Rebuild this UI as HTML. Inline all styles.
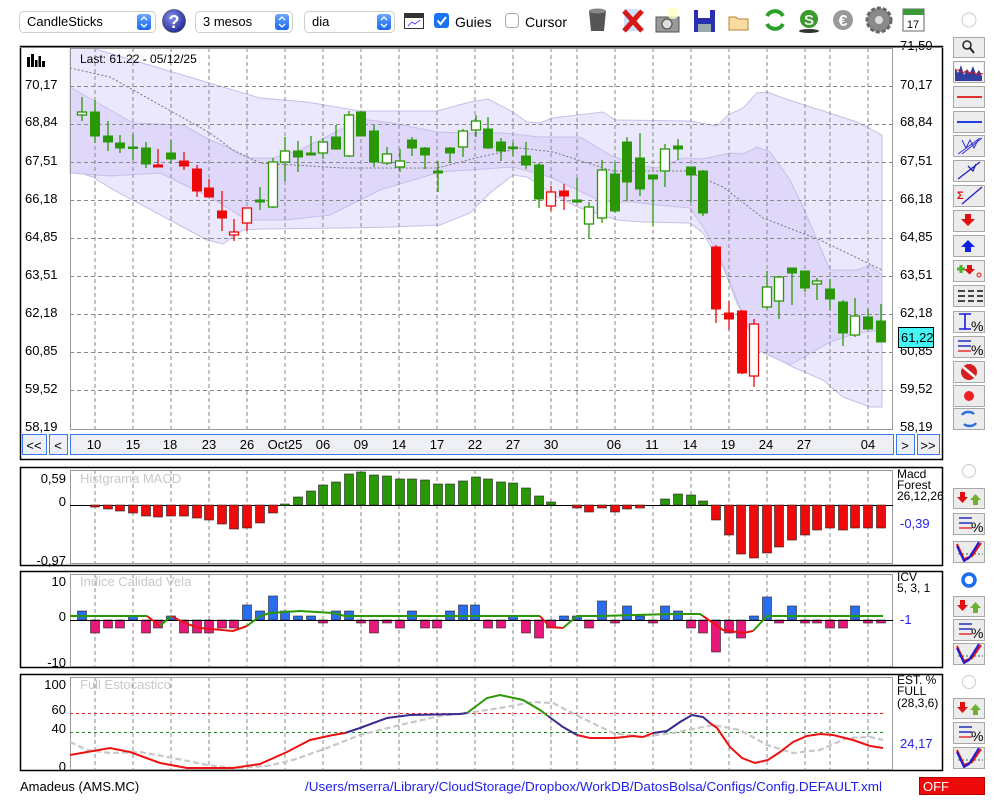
<!DOCTYPE html>
<html><head><meta charset="utf-8">
<style>
html,body{margin:0;padding:0;background:#fff;width:1000px;height:800px;overflow:hidden;font-family:"Liberation Sans",sans-serif;}
svg{position:absolute;left:0;top:0}
text{font-family:"Liberation Sans",sans-serif}
</style></head><body>
<svg width="1000" height="800" viewBox="0 0 1000 800" xmlns="http://www.w3.org/2000/svg">
<defs>
<linearGradient id="bl" x1="0" y1="0" x2="0" y2="1"><stop offset="0" stop-color="#6aa8ff"/><stop offset="1" stop-color="#1a66f0"/></linearGradient>
<radialGradient id="q" cx="0.4" cy="0.35" r="0.7"><stop offset="0" stop-color="#8a90f0"/><stop offset="1" stop-color="#1a2590"/></radialGradient>
</defs>
<!-- top toolbar -->
<g font-size="13" fill="#000">
<rect x="19.5" y="11.5" width="136" height="21" rx="4" fill="#fff" stroke="#cfcfcf"/>
<text x="27" y="26">CandleSticks</text>
<rect x="137" y="14" width="14" height="16" rx="3" fill="url(#bl)"/>
<path d="M141 20l3-3 3 3M141 24l3 3 3-3" stroke="#fff" fill="none" stroke-width="1.3"/>
<circle cx="174" cy="21" r="11.5" fill="url(#q)" stroke="#556" stroke-width="0.8"/>
<text x="174" y="28" font-size="18" font-weight="bold" fill="#fff" text-anchor="middle">?</text>
<rect x="195.5" y="11.5" width="97" height="21" rx="4" fill="#fff" stroke="#cfcfcf"/>
<text x="203" y="26">3 mesos</text>
<rect x="275" y="14" width="14" height="16" rx="3" fill="url(#bl)"/>
<path d="M279 20l3-3 3 3M279 24l3 3 3-3" stroke="#fff" fill="none" stroke-width="1.3"/>
<rect x="304.5" y="11.5" width="90" height="21" rx="4" fill="#fff" stroke="#cfcfcf"/>
<text x="312" y="26">dia</text>
<rect x="377" y="14" width="14" height="16" rx="3" fill="url(#bl)"/>
<path d="M381 20l3-3 3 3M381 24l3 3 3-3" stroke="#fff" fill="none" stroke-width="1.3"/>
<rect x="404.5" y="13.5" width="19" height="15" fill="#fff" stroke="#333"/>
<rect x="405" y="14" width="18" height="4" fill="#333"/>
<path d="M408 26l4-4 3 2 5-4" stroke="#22f" fill="none" stroke-width="0.8"/>
<rect x="434" y="13" width="15" height="15" rx="3" fill="#1a73f0"/>
<path d="M437.5 20.5l3 3.5 5.5-7" stroke="#fff" fill="none" stroke-width="2"/>
<text x="455" y="27" font-size="14">Guies</text>
<rect x="505.5" y="13.5" width="13" height="14" rx="3" fill="#fff" stroke="#aaa"/>
<text x="525" y="27" font-size="14">Cursor</text>
</g>
<!-- icons top -->
<path d="M589 11h17l-2 20h-13z" fill="#555"/><ellipse cx="597.5" cy="11" rx="8.5" ry="2.5" fill="#888"/>
<rect x="624" y="9" width="14" height="22" fill="#cfe0ff"/>
<path d="M624 11l18 20M642 11l-18 20" stroke="#d81818" stroke-width="5"/>
<rect x="656" y="17" width="23" height="15" fill="#999" stroke="#555"/><circle cx="667" cy="24" r="5" fill="#ddd" stroke="#444"/><circle cx="673" cy="13" r="6" fill="#ffffc8" opacity="0.8"/>
<rect x="694" y="10" width="21" height="22" fill="#2830b0"/><rect x="698" y="10" width="12" height="8" fill="#fff"/><rect x="698" y="24" width="13" height="8" fill="#9aa"/>
<path d="M729 17h7l2 2h10v11h-19z" fill="#f8dca0" stroke="#b88040"/>
<path d="M767 16a9 9 0 0 1 16 0" stroke="#2aa02a" stroke-width="4" fill="none"/><path d="M783 24a9 9 0 0 1-16 0" stroke="#2aa02a" stroke-width="4" fill="none"/>
<ellipse cx="809" cy="31" rx="10" ry="2" fill="#333"/><circle cx="809" cy="19" r="9" fill="#3a9a2a"/><text x="809" y="25" font-size="15" font-weight="bold" fill="#eee" text-anchor="middle">S</text>
<circle cx="843" cy="20" r="10" fill="#999"/><text x="843" y="26" font-size="16" font-weight="bold" fill="#fff" text-anchor="middle">€</text>
<circle cx="879" cy="20" r="12" fill="#8a8a8a" stroke="#666" stroke-dasharray="4 2" stroke-width="3"/><circle cx="879" cy="20" r="4" fill="#ddd"/>
<rect x="903" y="9" width="21" height="22" fill="#fff" stroke="#666"/><rect x="903" y="9" width="21" height="6" fill="#3a9a3a"/><text x="913" y="28" font-size="11" text-anchor="middle">17</text>
<circle cx="969" cy="20" r="7" fill="#fff" stroke="#ccc"/>

<!-- MAIN PANEL -->
<rect x="20.5" y="46.5" width="922" height="413" fill="#fff" stroke="#000" stroke-width="1.5"/>
<polygon points="70,48 92,48 260,98 307,102 360,111 437,111 470,102 488,99 513,112 527,122 540,123 552,118 603,112 615,120 690,121 717,126 728,115 743,108 757,93 767,92 783,98 820,110 857,122 882,135 882,407 870,407 843,397 823,380 793,367 760,350 737,303 723,267 703,233 690,223 643,222 617,220 580,208 557,197 527,177 513,175 490,193 470,213 440,225 393,227 343,228 260,229 243,230 223,244 207,240 110,188 93,177 70,170" fill="#ebe7fd" stroke="#c6bfe8"/>
<polygon points="70,87 133,123 183,125 210,140 227,147 247,158 273,158 300,150 330,135 360,119 393,123 437,132 470,133 503,133 540,137 580,137 610,155 637,165 657,168 683,158 703,159 730,153 743,154 757,147 770,152 790,180 803,207 830,270 857,270 870,265 882,275 882,330 857,333 830,342 790,365 757,350 720,257 703,227 690,208 657,205 633,202 603,202 550,177 513,167 470,170 440,172 380,190 330,215 287,220 247,220 210,197 160,173 110,176 70,173" fill="#dfd8fa" stroke="#c6bfe8"/>
<polyline points="70,68 110,77 160,105 210,133 233,150 260,163 343,168 437,168 480,157 520,148 553,152 613,171 687,171 723,187 763,218 820,240 882,270" fill="none" stroke="#777" stroke-dasharray="2 2"/>
<g stroke="#888" stroke-dasharray="4 3" stroke-width="1">
<path d="M70 86.5H893M70 124.5H893M70 162.5H893M70 200.5H893M70 238.5H893M70 276.5H893M70 314.5H893M70 352.5H893M70 390.5H893"/>
<path d="M95 48V430M133 48V430M171 48V430M209 48V430M247 48V430M285 48V430M323 48V430M361 48V430M399 48V430M437 48V430M475 48V430M513 48V430M551 48V430M577 48V430M615 48V430M653 48V430M691 48V430M729 48V430M767 48V430M805 48V430M830 48V430M868 48V430"/>
<path d="M95 470V564M133 470V564M171 470V564M209 470V564M247 470V564M285 470V564M323 470V564M361 470V564M399 470V564M437 470V564M475 470V564M513 470V564M551 470V564M577 470V564M615 470V564M653 470V564M691 470V564M729 470V564M767 470V564M805 470V564M830 470V564M868 470V564"/>
<path d="M95 574V666M133 574V666M171 574V666M209 574V666M247 574V666M285 574V666M323 574V666M361 574V666M399 574V666M437 574V666M475 574V666M513 574V666M551 574V666M577 574V666M615 574V666M653 574V666M691 574V666M729 574V666M767 574V666M805 574V666M830 574V666M868 574V666"/>
<path d="M95 677V769M133 677V769M171 677V769M209 677V769M247 677V769M285 677V769M323 677V769M361 677V769M399 677V769M437 677V769M475 677V769M513 677V769M551 677V769M577 677V769M615 677V769M653 677V769M691 677V769M729 677V769M767 677V769M805 677V769M830 677V769M868 677V769"/>
</g>
<rect x="70.5" y="48.5" width="822" height="381" fill="none" stroke="#999"/>
<!-- wicks -->
<path stroke="#2a9806" stroke-width="1.3" fill="none" d="M82 97V121M95 100V143M108 121V151M120 135V153M133 134V160M146 142V168M171 140V164M260 187V210M273 158V208M285 137V181M298 141V172M311 136V155M323 138V159M336 125V150M349 111V157M361 111V136M374 125V167M387 147V165M400 149V172M412 137V156M425 147V169M438 161V192M450 147V163M463 129V157M476 115V137M488 117V149M501 138V161M513 142V156M526 142V169M539 163V208M577 178V203M589 202V239M602 160V223M615 162V213M627 137V201M640 133V196M653 175V226M665 144V187M678 139V160M691 167V202M703 170V216M767 271V309M779 277V319M792 268V305M805 271V292M817 278V300M830 279V310M843 300V346M855 298V337M868 309V329M881 304V342"/>
<path stroke="#ee0a0a" stroke-width="1.3" fill="none" d="M158 149V167M184 152V170M197 165V197M209 179V197M222 191V231M234 219V241M247 208V231M551 186V211M564 184V210M716 245V323M729 301V330M742 310V374M754 319V387"/>
<g fill="#2a9806" stroke="#2a9806">
<rect x="90.5" y="112" width="9" height="24"/><rect x="103.5" y="136" width="9" height="6"/><rect x="115.5" y="143" width="9" height="5"/><rect x="128.5" y="147" width="9" height="1.5"/><rect x="141.5" y="148" width="9" height="16"/><rect x="166.5" y="153" width="9" height="6"/><rect x="255.5" y="200" width="9" height="2"/><rect x="293.5" y="151" width="9" height="6"/><rect x="306.5" y="153" width="9" height="2"/><rect x="331.5" y="137" width="9" height="12"/><rect x="356.5" y="112" width="9" height="24"/><rect x="369.5" y="131" width="9" height="31"/><rect x="407.5" y="140" width="9" height="8"/><rect x="420.5" y="148" width="9" height="7"/><rect x="433.5" y="171" width="9" height="2"/><rect x="445.5" y="148" width="9" height="5"/><rect x="483.5" y="129" width="9" height="19"/><rect x="496.5" y="142" width="9" height="9"/><rect x="508.5" y="147" width="9" height="1.5"/><rect x="521.5" y="156" width="9" height="9"/><rect x="534.5" y="165" width="9" height="34"/><rect x="572.5" y="200" width="9" height="2"/><rect x="610.5" y="174" width="9" height="37"/><rect x="622.5" y="142" width="9" height="40"/><rect x="635.5" y="158" width="9" height="31"/><rect x="648.5" y="175" width="9" height="4"/><rect x="673.5" y="146" width="9" height="3"/><rect x="686.5" y="167" width="9" height="8"/><rect x="698.5" y="171" width="9" height="42"/><rect x="787.5" y="268" width="9" height="5"/><rect x="800.5" y="271" width="9" height="17"/><rect x="825.5" y="289" width="9" height="10"/><rect x="838.5" y="302" width="9" height="31"/><rect x="863.5" y="317" width="9" height="12"/><rect x="876.5" y="321" width="9" height="21"/>
</g>
<g fill="#fff" stroke="#2a9806" stroke-width="1.3">
<rect x="77.5" y="112" width="9" height="3"/><rect x="268.5" y="162" width="9" height="45"/><rect x="280.5" y="151" width="9" height="11"/><rect x="318.5" y="142" width="9" height="11"/><rect x="344.5" y="115" width="9" height="41"/><rect x="382.5" y="154" width="9" height="9"/><rect x="395.5" y="161" width="9" height="6"/><rect x="458.5" y="131" width="9" height="16"/><rect x="471.5" y="121" width="9" height="9"/><rect x="584.5" y="207" width="9" height="17"/><rect x="597.5" y="170" width="9" height="48"/><rect x="660.5" y="149" width="9" height="22"/><rect x="762.5" y="287" width="9" height="20"/><rect x="774.5" y="277" width="9" height="24"/><rect x="812.5" y="281" width="9" height="3"/><rect x="850.5" y="316" width="9" height="19"/>
</g>
<g fill="#ee0a0a" stroke="#ee0a0a">
<rect x="153.5" y="165" width="9" height="2"/><rect x="179.5" y="161" width="9" height="5"/><rect x="192.5" y="169" width="9" height="22"/><rect x="204.5" y="188" width="9" height="9"/><rect x="217.5" y="211" width="9" height="7"/><rect x="559.5" y="191" width="9" height="5"/><rect x="711.5" y="247" width="9" height="62"/><rect x="724.5" y="313" width="9" height="6"/><rect x="737.5" y="311" width="9" height="62"/>
</g>
<g fill="#fff" stroke="#ee0a0a" stroke-width="1.3">
<rect x="229.5" y="232" width="9" height="3"/><rect x="242.5" y="208" width="9" height="15"/><rect x="546.5" y="192" width="9" height="14"/><rect x="749.5" y="324" width="9" height="52"/>
</g>
<text x="80" y="63" font-size="12">Last: 61.22 - 05/12/25</text>
<g fill="#000"><rect x="27" y="57" width="3" height="10"/><rect x="31" y="54" width="3" height="13"/><rect x="35" y="60" width="2.5" height="7"/><rect x="38.5" y="56" width="2.5" height="11"/><rect x="42" y="61" width="3" height="6"/></g>
<g font-size="13" fill="#000">
<text x="25" y="89">70,17</text><text x="25" y="126">68,84</text><text x="25" y="165">67,51</text><text x="25" y="203">66,18</text><text x="25" y="241">64,85</text><text x="25" y="279">63,51</text><text x="25" y="317">62,18</text><text x="25" y="355">60,85</text><text x="25" y="393">59,52</text><text x="25" y="431">58,19</text>
<text x="900" y="50">71,50</text><text x="900" y="89">70,17</text><text x="900" y="126">68,84</text><text x="900" y="165">67,51</text><text x="900" y="203">66,18</text><text x="900" y="241">64,85</text><text x="900" y="279">63,51</text><text x="900" y="317">62,18</text><text x="900" y="355">60,85</text><text x="900" y="393">59,52</text><text x="900" y="431">58,19</text>
</g>
<rect x="898.5" y="327.5" width="35" height="20" fill="#44f6f6" stroke="#000"/>
<text x="901" y="342" font-size="13">61,22</text>
<rect x="20" y="46" width="923" height="2" fill="#fff"/><rect x="20" y="46" width="923" height="1.5" fill="#000"/>
<!-- nav bar -->
<g stroke="#3a7af0" fill="#eef0f6">
<rect x="22.5" y="434.5" width="24" height="20"/><rect x="49.5" y="434.5" width="18" height="20"/><rect x="70.5" y="434.5" width="823" height="20"/><rect x="896.5" y="434.5" width="18" height="20"/><rect x="917.5" y="434.5" width="22" height="20"/>
</g>
<g font-size="13" fill="#000" text-anchor="middle">
<text x="34" y="450">&lt;&lt;</text><text x="58" y="450">&lt;</text><text x="905" y="450">&gt;</text><text x="928" y="450">&gt;&gt;</text>
<text x="94" y="449">10</text><text x="133" y="449">15</text><text x="170" y="449">18</text><text x="209" y="449">23</text><text x="247" y="449">26</text><text x="285" y="449">Oct25</text><text x="323" y="449">06</text><text x="361" y="449">09</text><text x="399" y="449">14</text><text x="437" y="449">17</text><text x="475" y="449">22</text><text x="513" y="449">27</text><text x="551" y="449">30</text><text x="614" y="449">06</text><text x="652" y="449">11</text><text x="690" y="449">14</text><text x="728" y="449">19</text><text x="766" y="449">24</text><text x="804" y="449">27</text><text x="868" y="449">04</text>
</g>

<!-- MACD PANEL -->
<rect x="20.5" y="467.5" width="922" height="98" fill="none" stroke="#000" stroke-width="1.5"/>
<rect x="70.5" y="470.5" width="822" height="93" fill="none" stroke="#999"/>
<text x="80" y="483" font-size="13" fill="#c8c8c8">Histgrama MACD</text>
<path d="M70 505.5H893" stroke="#000"/>
<g fill="#2a9806" stroke="#222" stroke-width="0.6">
<rect x="280.5" y="504" width="9" height="1.5"/><rect x="293.5" y="497" width="9" height="8"/><rect x="306.5" y="491" width="9" height="14"/><rect x="318.5" y="485" width="9" height="20"/><rect x="331.5" y="482" width="9" height="23"/><rect x="344.5" y="474" width="9" height="31"/><rect x="356.5" y="472" width="9" height="33"/><rect x="369.5" y="475" width="9" height="30"/><rect x="382.5" y="476" width="9" height="29"/><rect x="395.5" y="479" width="9" height="26"/><rect x="407.5" y="479" width="9" height="26"/><rect x="420.5" y="480" width="9" height="25"/><rect x="433.5" y="484" width="9" height="21"/><rect x="445.5" y="484" width="9" height="21"/><rect x="458.5" y="481" width="9" height="24"/><rect x="471.5" y="477" width="9" height="28"/><rect x="483.5" y="479" width="9" height="26"/><rect x="496.5" y="482" width="9" height="23"/><rect x="508.5" y="483" width="9" height="22"/><rect x="521.5" y="488" width="9" height="17"/><rect x="534.5" y="496" width="9" height="9"/><rect x="546.5" y="502" width="9" height="3"/><rect x="660.5" y="499" width="9" height="6"/><rect x="673.5" y="494" width="9" height="11"/><rect x="686.5" y="495" width="9" height="10"/><rect x="698.5" y="501" width="9" height="4"/>
</g>
<g fill="#ee0a0a" stroke="#222" stroke-width="0.6">
<rect x="90.5" y="505" width="9" height="2"/><rect x="103.5" y="505" width="9" height="4"/><rect x="115.5" y="505" width="9" height="6"/><rect x="128.5" y="505" width="9" height="8"/><rect x="141.5" y="505" width="9" height="11"/><rect x="153.5" y="505" width="9" height="12"/><rect x="166.5" y="505" width="9" height="11"/><rect x="179.5" y="505" width="9" height="11"/><rect x="192.5" y="505" width="9" height="13"/><rect x="204.5" y="505" width="9" height="15"/><rect x="217.5" y="505" width="9" height="19"/><rect x="229.5" y="505" width="9" height="24"/><rect x="242.5" y="505" width="9" height="23"/><rect x="255.5" y="505" width="9" height="18"/><rect x="268.5" y="505" width="9" height="8"/><rect x="572.5" y="505" width="9" height="3"/><rect x="584.5" y="505" width="9" height="7"/><rect x="597.5" y="505" width="9" height="3"/><rect x="610.5" y="505" width="9" height="7"/><rect x="622.5" y="505" width="9" height="4"/><rect x="635.5" y="505" width="9" height="3"/><rect x="711.5" y="505" width="9" height="15"/><rect x="724.5" y="505" width="9" height="30"/><rect x="736.5" y="505" width="9" height="49"/><rect x="749.5" y="505" width="9" height="53"/><rect x="762.5" y="505" width="9" height="48"/><rect x="774.5" y="505" width="9" height="42"/><rect x="787.5" y="505" width="9" height="35"/><rect x="800.5" y="505" width="9" height="30"/><rect x="812.5" y="505" width="9" height="25"/><rect x="825.5" y="505" width="9" height="23"/><rect x="838.5" y="505" width="9" height="25"/><rect x="850.5" y="505" width="9" height="23"/><rect x="863.5" y="505" width="9" height="23"/><rect x="876.5" y="505" width="9" height="23"/>
</g>
<g font-size="13" fill="#000" text-anchor="end"><text x="66" y="483">0,59</text><text x="66" y="506">0</text><text x="66" y="565">-0,97</text></g>
<g font-size="12" fill="#000"><text x="897" y="478">Macd</text><text x="897" y="489">Forest</text><text x="897" y="500">26,12,26</text></g>
<text x="900" y="528" font-size="13" fill="#2222ee">-0,39</text>

<!-- ICV PANEL -->
<rect x="20.5" y="571.5" width="922" height="96" fill="none" stroke="#000" stroke-width="1.5"/>
<rect x="70.5" y="574.5" width="822" height="92" fill="none" stroke="#999"/>
<text x="80" y="586" font-size="13" fill="#c8c8c8">Indice Calidad Vela</text>
<g fill="#2a6ef0" stroke="#222" stroke-width="0.6">
<rect x="77.5" y="611" width="9" height="9"/><rect x="128.5" y="616" width="9" height="4"/><rect x="166.5" y="616" width="9" height="4"/><rect x="242.5" y="605" width="9" height="15"/><rect x="255.5" y="611" width="9" height="9"/><rect x="268.5" y="596" width="9" height="24"/><rect x="280.5" y="611" width="9" height="9"/><rect x="293.5" y="616" width="9" height="4"/><rect x="306.5" y="616" width="9" height="4"/><rect x="331.5" y="611" width="9" height="9"/><rect x="344.5" y="611" width="9" height="9"/><rect x="407.5" y="611" width="9" height="9"/><rect x="445.5" y="611" width="9" height="9"/><rect x="458.5" y="605" width="9" height="15"/><rect x="470.5" y="605" width="9" height="15"/><rect x="508.5" y="616" width="9" height="4"/><rect x="559.5" y="616" width="9" height="4"/><rect x="572.5" y="616" width="9" height="4"/><rect x="597.5" y="601" width="9" height="19"/><rect x="622.5" y="606" width="9" height="14"/><rect x="635.5" y="616" width="9" height="4"/><rect x="660.5" y="606" width="9" height="14"/><rect x="673.5" y="611" width="9" height="9"/><rect x="749.5" y="616" width="9" height="4"/><rect x="762.5" y="597" width="9" height="23"/><rect x="787.5" y="606" width="9" height="14"/><rect x="850.5" y="606" width="9" height="14"/>
</g>
<g fill="#e8177a" stroke="#222" stroke-width="0.6">
<rect x="90.5" y="620" width="9" height="13"/><rect x="103.5" y="620" width="9" height="8"/><rect x="115.5" y="620" width="9" height="8"/><rect x="141.5" y="620" width="9" height="13"/><rect x="153.5" y="620" width="9" height="8"/><rect x="179.5" y="620" width="9" height="13"/><rect x="192.5" y="620" width="9" height="13"/><rect x="204.5" y="620" width="9" height="13"/><rect x="217.5" y="620" width="9" height="8"/><rect x="229.5" y="620" width="9" height="8"/><rect x="318.5" y="620" width="9" height="3"/><rect x="356.5" y="620" width="9" height="3"/><rect x="369.5" y="620" width="9" height="13"/><rect x="382.5" y="620" width="9" height="3"/><rect x="395.5" y="620" width="9" height="8"/><rect x="420.5" y="620" width="9" height="8"/><rect x="432.5" y="620" width="9" height="8"/><rect x="483.5" y="620" width="9" height="8"/><rect x="496.5" y="620" width="9" height="8"/><rect x="521.5" y="620" width="9" height="13"/><rect x="534.5" y="620" width="9" height="18"/><rect x="546.5" y="620" width="9" height="8"/><rect x="584.5" y="620" width="9" height="8"/><rect x="610.5" y="620" width="9" height="3"/><rect x="648.5" y="620" width="9" height="3"/><rect x="686.5" y="620" width="9" height="8"/><rect x="698.5" y="620" width="9" height="13"/><rect x="711.5" y="620" width="9" height="32"/><rect x="724.5" y="620" width="9" height="13"/><rect x="736.5" y="620" width="9" height="18"/><rect x="774.5" y="620" width="9" height="3"/><rect x="800.5" y="620" width="9" height="3"/><rect x="812.5" y="620" width="9" height="3"/><rect x="825.5" y="620" width="9" height="8"/><rect x="838.5" y="620" width="9" height="8"/><rect x="863.5" y="620" width="9" height="3"/><rect x="876.5" y="620" width="9" height="3"/>
</g>
<path d="M70 620.5H893" stroke="#000"/>
<g fill="none" stroke-width="2">
<path stroke="#2a9806" d="M70 616H147M160 626L171 616M247 626L260 616L270 613L300 611L333 613L345 616H540M563 628L577 616L600 616L673 614L700 614L703 616M753 631L767 616H883"/>
<path stroke="#ee1111" d="M147 616L160 626M171 616L187 624L200 628L233 631L247 626M540 616L550 627L563 628M703 616L723 630L743 633L753 631"/>
</g>
<g font-size="13" fill="#000" text-anchor="end"><text x="66" y="586">10</text><text x="66" y="621">0</text><text x="66" y="667">-10</text></g>
<g font-size="12" fill="#000"><text x="897" y="581">ICV</text><text x="897" y="592">5, 3, 1</text></g>
<text x="900" y="624" font-size="13" fill="#2222ee">-1</text>

<!-- STOCH PANEL -->
<rect x="20.5" y="674.5" width="922" height="96" fill="none" stroke="#000" stroke-width="1.5"/>
<rect x="70.5" y="677.5" width="822" height="92" fill="none" stroke="#999"/>
<text x="80" y="689" font-size="13" fill="#c8c8c8">Full Estocastico</text>
<path d="M70 713.5H883" stroke="#e02020" stroke-dasharray="3 3"/>
<path d="M70 732.5H883" stroke="#208020" stroke-dasharray="3 3"/>
<polyline fill="none" stroke="#c8c8c8" stroke-width="2.2" stroke-dasharray="6 3" points="70,742 87,750 110,753 140,752 173,758 207,765 233,768 267,766 293,760 327,748 360,735 400,725 440,716 467,713 500,708 533,702 553,703 580,717 613,733 640,737 673,733 713,725 740,730 767,745 793,753 820,750 847,738 870,737 883,740"/>
<g fill="none" stroke-width="2">
<polyline stroke="#ee1111" points="70,755 110,748 130,752 160,763 187,768 233,768 260,764 287,752 310,740 333,735 345,733"/>
<polyline stroke="#3a2a90" points="345,733 360,728 387,718 410,715 460,714 467,713"/>
<polyline stroke="#2a9806" points="467,713 487,698 500,695 523,700 540,710 548,716"/>
<polyline stroke="#3a2a90" points="548,716 563,727 577,735"/>
<polyline stroke="#ee1111" points="577,735 590,738 615,738 633,736 643,737 653,733"/>
<polyline stroke="#3a2a90" points="653,733 667,731 680,722 692,715 703,717 710,723"/>
<polyline stroke="#ee1111" points="710,723 717,728 730,747 742,758 755,763 768,760 780,752 793,742 807,736 820,734 833,735 853,740 870,746 883,748"/>
</g>
<g font-size="13" fill="#000" text-anchor="end"><text x="66" y="689">100</text><text x="66" y="714">60</text><text x="66" y="733">40</text><text x="66" y="771">0</text></g>
<g font-size="12" fill="#000"><text x="897" y="684">EST. %</text><text x="897" y="695">FULL</text><text x="897" y="707">(28,3,6)</text></g>
<text x="900" y="748" font-size="13" fill="#2222ee">24,17</text>

<!-- footer -->
<text x="20" y="791" font-size="13" fill="#000">Amadeus (AMS.MC)</text>
<text x="305" y="791" font-size="13" fill="#2222ee" textLength="577" lengthAdjust="spacingAndGlyphs">/Users/mserra/Library/CloudStorage/Dropbox/WorkDB/DatosBolsa/Configs/Config.DEFAULT.xml</text>
<rect x="919.5" y="777.5" width="65" height="17" fill="#ee0a0a" stroke="#b00"/>
<text x="923" y="791" font-size="13" fill="#fff">OFF</text>

<!-- right toolbar -->
<g fill="#ececec" stroke="#a8a8a8">
<rect x="953.5" y="37.5" width="31" height="20"/><rect x="953.5" y="61.5" width="31" height="21"/><rect x="953.5" y="86.5" width="31" height="21"/><rect x="953.5" y="111.5" width="31" height="21"/><rect x="953.5" y="135.5" width="31" height="21"/><rect x="953.5" y="160.5" width="31" height="21"/><rect x="953.5" y="185.5" width="31" height="21"/><rect x="953.5" y="210.5" width="31" height="21"/><rect x="953.5" y="235.5" width="31" height="21"/><rect x="953.5" y="260.5" width="31" height="21"/><rect x="953.5" y="285.5" width="31" height="21"/><rect x="953.5" y="311.5" width="31" height="21"/><rect x="953.5" y="336.5" width="31" height="21"/><rect x="953.5" y="361.5" width="31" height="21"/><rect x="953.5" y="385.5" width="31" height="21"/><rect x="953.5" y="408.5" width="31" height="21"/>
<rect x="953.5" y="488.5" width="31" height="20"/><rect x="953.5" y="513.5" width="31" height="21"/><rect x="953.5" y="541.5" width="31" height="21"/>
<rect x="953.5" y="596.5" width="31" height="20"/><rect x="953.5" y="619.5" width="31" height="21"/><rect x="953.5" y="643.5" width="31" height="21"/>
<rect x="953.5" y="698.5" width="31" height="20"/><rect x="953.5" y="722.5" width="31" height="21"/><rect x="953.5" y="747.5" width="31" height="21"/>
</g>
<circle cx="967" cy="45" r="4" fill="none" stroke="#222" stroke-width="1.5"/><path d="M970 48l4 5" stroke="#222" stroke-width="2"/>
<rect x="955" y="63" width="28" height="18" fill="#fff" stroke="none"/><path d="M955 81V68l3 5 3-8 3 10 3-6 3 4 3-7 3 8 3-4 3 6V81z" fill="#3040a0"/><path d="M955 70h6l2 3 3-2 3 2 4-1 3 3 4-2 3 1" stroke="#e01010" fill="none"/>
<path d="M957 97h25" stroke="#e03030" stroke-width="2"/>
<path d="M957 122h25" stroke="#2040e0" stroke-width="2"/>
<path d="M958 154l22-16M962 154l20-16M962 140l4 8 4-8 4 8 4-8" stroke="#3030e0" fill="none"/>
<path d="M958 179l22-17M968 166l5 5 3-7" stroke="#2020c0" fill="none" stroke-width="1.3"/>
<text x="957" y="199" font-size="11" fill="#e01010" font-weight="bold">Σ</text><path d="M962 204l20-17" stroke="#2020c0" stroke-width="1.3"/>
<path d="M965 214h6v5h4l-7 7-7-7h4z" fill="#e01010"/>
<path d="M965 252h6v-5h4l-7-7-7 7h4z" fill="#1020e0"/>
<path d="M957 269h8M961 265v8" stroke="#50b030" stroke-width="3"/><path d="M967 265h5v4h3l-5.5 5.5-5.5-5.5h3z" fill="#e01010"/><circle cx="979" cy="275" r="2" fill="none" stroke="#e01010"/>
<path d="M958 291h7M968 291h6M977 291h6M958 296h7M968 296h6M977 296h6M958 301h7M968 301h6M977 301h6" stroke="#444" stroke-width="2"/>
<path d="M959 314h12M959 329h12M965 314v15" stroke="#1a1ae0" stroke-width="1.6"/><text x="971" y="331" font-size="14">%</text>
<path d="M958 341h13M958 346h13" stroke="#2030c0" stroke-width="1.6"/><path d="M958 351h13" stroke="#e04040" stroke-width="1.6"/><text x="971" y="355" font-size="14">%</text>
<circle cx="969" cy="372" r="8" fill="#d42020"/><path d="M963 367l12 10" stroke="#fff" stroke-width="2.5"/>
<circle cx="969" cy="396" r="5" fill="#ee2020"/>
<path d="M962 415a7 5 0 0 1 12-1M976 423a7 5 0 0 1-12 1" stroke="#2a6ee0" stroke-width="2.5" fill="none"/>
<circle cx="969" cy="471" r="6.5" fill="#fff" stroke="#ccc"/>
<circle cx="969" cy="580" r="6" fill="#fff" stroke="#1a6ef0" stroke-width="3.5"/>
<circle cx="969" cy="682" r="6.5" fill="#fff" stroke="#ccc"/>
<g id="ud"><path d="M960 492h5v5h3l-5.5 6-5.5-6h3z" fill="#e01010" transform="translate(0,0)"/><path d="M973 505v-5h-3l5.5-6 5.5 6h-3v5z" fill="#70b030"/></g>
<use href="#ud" y="108"/><use href="#ud" y="210"/>
<g id="eq"><path d="M959 518h13M959 523h13" stroke="#2030c0" stroke-width="1.6"/><path d="M959 528h13" stroke="#e04040" stroke-width="1.6"/><text x="971" y="532" font-size="14">%</text></g>
<use href="#eq" y="106"/><use href="#eq" y="209"/>
<g id="st"><path d="M958 554h25" stroke="#208020" stroke-dasharray="2 2"/><path d="M957 544l7 15 8-3 9-13" stroke="#e01010" stroke-width="2" fill="none"/><path d="M957 546l7 15 5-3 10-16" stroke="#1a1ae0" stroke-width="2" fill="none"/></g>
<use href="#st" y="102"/><use href="#st" y="206"/>
</svg>
</body></html>
